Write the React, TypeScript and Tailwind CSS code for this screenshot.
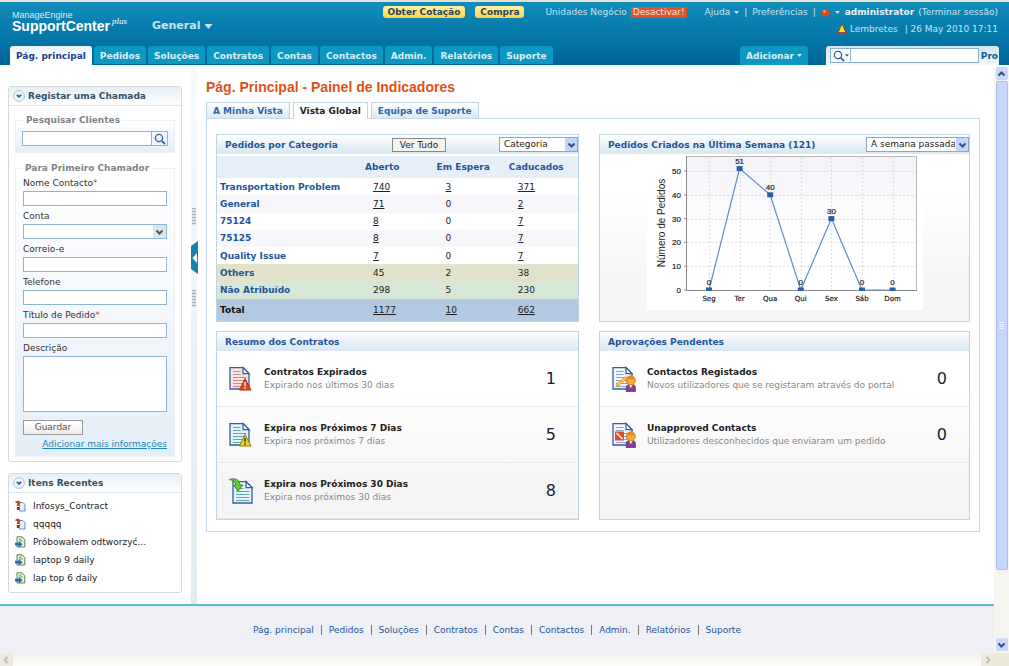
import React from "react";

const NAV = ["Pág. principal", "Pedidos", "Soluções", "Contratos", "Contas", "Contactos", "Admin.", "Relatórios", "Suporte"];

const ROWS: { name: string; values: string[]; tone: string; links: boolean[] }[] = [
  { name: "Transportation Problem", values: ["740", "3", "371"], tone: "bg-white", links: [true, true, true] },
  { name: "General", values: ["71", "0", "2"], tone: "bg-[#f6f6fb]", links: [true, false, true] },
  { name: "75124", values: ["8", "0", "7"], tone: "bg-white", links: [true, false, true] },
  { name: "75125", values: ["8", "0", "7"], tone: "bg-[#f6f6fb]", links: [true, false, true] },
  { name: "Quality Issue", values: ["7", "0", "7"], tone: "bg-white", links: [true, false, true] },
  { name: "Others", values: ["45", "2", "38"], tone: "bg-[#e2e2cb]", links: [false, false, false] },
  { name: "Não Atribuído", values: ["298", "5", "230"], tone: "bg-[#d7e7d7]", links: [false, false, false] },
];

const POINTS = [
  { day: "Seg", value: 0 },
  { day: "Ter", value: 51 },
  { day: "Qua", value: 40 },
  { day: "Qui", value: 0 },
  { day: "Sex", value: 30 },
  { day: "Sáb", value: 0 },
  { day: "Dom", value: 0 },
];

function SearchIcon() {
  return (
    <svg width="12" height="12" viewBox="0 0 12 12" fill="none" aria-hidden="true">
      <circle cx="5" cy="5" r="3.6" stroke="#33649e" strokeWidth="1.3" />
      <path d="M7.8 7.8 L11 11" stroke="#33649e" strokeWidth="1.9" />
    </svg>
  );
}

function Caret({ className }: { className: string }) {
  return (
    <svg className={className} viewBox="0 0 10 6" fill="currentColor" aria-hidden="true">
      <path d="M0 0H10L5 6Z" />
    </svg>
  );
}

function Chevron({ d = "M1.5 2.5 L4.5 5.5 L7.5 2.5", color = "#33507c" }: { d?: string; color?: string }) {
  return (
    <svg width="9" height="8" viewBox="0 0 9 8" fill="none" aria-hidden="true">
      <path d={d} stroke={color} strokeWidth="2" />
    </svg>
  );
}

function ToggleIcon() {
  return (
    <svg width="12" height="12" viewBox="0 0 12 12" fill="none" aria-hidden="true">
      <circle cx="6" cy="6" r="5.4" fill="#eef5fb" stroke="#a4c3dd" />
      <path d="M3.9 4.8 L6 6.9 L8.1 4.8" stroke="#1f5a9a" strokeWidth="1.7" />
    </svg>
  );
}

type Badge = "red" | "yellow" | "arrow" | "pencil" | "denied";

function DocIcon({ badge }: { badge: Badge }) {
  const line = badge === "red" ? "#c98a8c" : badge === "yellow" || badge === "arrow" ? "#5cab9f" : "#8ea4c4";
  const fill = badge === "red" ? "#fbe3e0" : badge === "yellow" || badge === "arrow" ? "#e4f4fb" : "#f1f7fd";
  const person = badge === "pencil" || badge === "denied";
  return (
    <svg width="26" height="26" viewBox="0 0 26 26" fill="none" aria-hidden="true">
      <g transform={badge === "arrow" ? "translate(3 3)" : "translate(0 1)"}>
        <path d="M1 0.6 H14 L20 6.6 V22 H1 Z" fill={fill} stroke="#335f9f" strokeWidth="1.3" />
        <path d="M14 0.6 V6.6 H20 Z" fill="#fff" stroke="#335f9f" strokeWidth="1.3" />
        <path d="M4 4.5H11.5M4 7.5H11.5M4 10.5H17.5M4 13.5H17.5M4 16.5H17.5M4 19.5H17.5" stroke={line} strokeWidth="1.1" />
      </g>
      {badge === "red" && (
        <>
          <path d="M16 12.5 L22 24 H10.5 Z" fill="#dd4a22" stroke="#ad3110" strokeLinejoin="round" />
          <path d="M16 16V20.3M16 21.3V22.7" stroke="#fff" strokeWidth="1.2" />
        </>
      )}
      {badge === "yellow" && (
        <>
          <path d="M16 12.5 L22 24 H10.5 Z" fill="#f3d519" stroke="#8b7715" strokeLinejoin="round" />
          <path d="M16 16V20.3M16 21.3V22.7" stroke="#222" strokeWidth="1.3" />
        </>
      )}
      {badge === "arrow" && (
        <path d="M0.5 1.6 C5 -0.3 10.5 1 11 7 H14 L9 13 L4.3 7 H7 C6.7 4 4.2 2.2 0.5 1.6Z" fill="#63cc2e" stroke="#2e8230" strokeWidth="0.9" />
      )}
      {badge === "pencil" && <path d="M3.8 20.5 L5.4 17.4 L13.6 10.6 L15.2 12.4 L6.8 19.4 Z" fill="#fbd442" stroke="#d28e22" strokeWidth="0.8" />}
      {badge === "denied" && (
        <>
          <path d="M3 9.5H12V18.5H3Z" fill="#e14d24" />
          <path d="M4.5 11L10.5 17" stroke="#fff" strokeWidth="1.5" />
        </>
      )}
      {person && (
        <>
          <path d="M14.2 25.4 V21.5 C14.2 19.2 16 18.4 18.7 18.4 C21.5 18.4 23.4 19.2 23.4 21.5 V25.4 Z" fill="#7f4398" stroke="#5e2b7a" strokeWidth="0.8" />
          <path d="M17 18.6 L18.8 22.3 L20.6 18.6Z" fill="#fff" />
          <circle cx="18.8" cy="14.4" r="4.5" fill="#f5ad36" stroke="#d87a1c" />
          <path d="M14.8 13.6 Q16 9.6 20 10.2 Q22.6 11 22.8 14 Q19.5 12.2 14.8 13.6" fill="#ea8720" />
        </>
      )}
    </svg>
  );
}

function ContractIcon() {
  return (
    <svg width="11" height="12" viewBox="0 0 11 12" fill="none" aria-hidden="true">
      <path d="M4.5 2.5H8L10 4.5V11H4.5Z" fill="#e3f0fc" stroke="#5a86bb" strokeWidth="0.9" />
      <path d="M0.5 1.5 C2 0.2 5 0.4 5.2 2.4 C5.3 4 4.3 4.3 4.2 6 H1.8 C1.8 4.6 2.4 4.2 2.4 3 L0.5 3Z" fill="#d3401c" />
      <path d="M1.8 7H4.3V10H1.8Z" fill="#a32c11" />
    </svg>
  );
}

function RequestIcon() {
  return (
    <svg width="11" height="12" viewBox="0 0 11 12" fill="none" aria-hidden="true">
      <path d="M2 0.8H7L9.8 3.6V11H2Z" fill="#e5f2e0" stroke="#4f8b50" strokeWidth="1" />
      <path d="M4 3.2H6.5M4 5H8" stroke="#6aa668" />
      <path d="M0 6.8H3.8V5L7.5 8.2L3.8 11.4V9.5H0Z" fill="#2d65bb" />
    </svg>
  );
}

function Header() {
  return (
    <header className="flex h-[65px] shrink-0 flex-col border-t-2 border-[#e6e1d5] bg-linear-to-b from-[#118dba] to-[#006599] text-[#c2e4f3]">
      <div className="flex flex-1 items-start justify-between pl-3 pr-[11px] pt-1">
        <div className="flex items-end">
          <div className="w-[140px] pt-1 text-white">
            <div className="font-['Liberation_Sans'] text-[9px] leading-[10px] text-[#d7eef8]">ManageEngine</div>
            <div className="flex leading-[13px]">
              <span className="font-['Liberation_Sans'] text-[14px] font-bold">SupportCenter</span>
              <span className="-mt-1 ml-[2px] font-['Liberation_Serif'] text-[9px] italic leading-[10px]">plus</span>
            </div>
          </div>
          <button type="button" className="flex items-center gap-1 text-[11px] font-bold leading-[14px]">
            General <Caret className="h-[5px] w-[9px]" />
          </button>
        </div>
        <div className="flex flex-col items-end gap-[5px]">
          <div className="flex items-center leading-3">
            <div className="mr-[21px] flex gap-[10px] font-bold text-[#26455b]">
              <button type="button" className="h-[12px] rounded-[3px] bg-linear-to-b from-[#fff2a0] to-[#fbd33c] px-[5px] leading-[12px]">Obter Cotação</button>
              <button type="button" className="h-[12px] rounded-[3px] bg-linear-to-b from-[#fff2a0] to-[#fbd33c] px-[5px] leading-[12px]">Compra</button>
            </div>
            <span>Unidades Negócio</span>
            <button type="button" className="ml-1 h-[11px] bg-[#de5428] px-[2px] leading-[11px] text-[#fbe0d4]">Desactivar!</button>
            <a href="#ajuda" className="ml-[18px] flex items-center gap-1">Ajuda <Caret className="h-[3px] w-[5px]" /></a>
            <span className="mx-[5px]">|</span>
            <a href="#preferencias">Preferências</a>
            <span className="mx-[5px]">|</span>
            <svg width="9" height="9" viewBox="0 0 9 9" aria-hidden="true">
              <circle cx="4.5" cy="4.8" r="3.7" fill="#e1481b" />
              <circle cx="3.4" cy="3.4" r="1.3" fill="#f7a07c" />
            </svg>
            <Caret className="mx-[5px] h-[3px] w-[5px]" />
            <b className="mr-1 text-[#e0f2fa]">administrator</b>
            <a href="#sair">(Terminar sessão)</a>
          </div>
          <div className="flex items-center leading-3">
            <svg width="10" height="11" viewBox="0 0 10 11" aria-hidden="true">
              <path d="M5 0.8C7.4 2.4 6.6 6 9.4 8.6H0.6C3.4 6 2.6 2.4 5 0.8Z" fill="#ffd931" stroke="#b5401b" />
              <path d="M3.5 9.2H6.5V10.4H3.5Z" fill="#c8461c" />
            </svg>
            <a href="#lembretes" className="ml-[3px] mr-[7px]">Lembretes</a>
            <span>| 26 May 2010 17:11</span>
          </div>
        </div>
      </div>
      <div className="flex items-end justify-between pl-[10px] pr-[10px]">
        <nav className="flex gap-[2px] font-bold">
          {NAV.map((item, i) => (
            <a
              key={item}
              href={`#${item}`}
              className={
                i === 0
                  ? "h-[19px] rounded-t-[3px] bg-linear-to-b from-[#e9f3f9] to-white to-60% px-[6px] leading-[20px] text-[#173f8a]"
                  : "h-[19px] rounded-t-[3px] border-b border-[#05669a] bg-[#0c98c3] px-[6px] leading-[20px] text-[#d9eff7]"
              }
            >
              {item}
            </a>
          ))}
        </nav>
        <div className="flex items-end">
          <button type="button" className="mr-[18px] flex h-[19px] items-center gap-[3px] rounded-t-[3px] bg-[#0c98c3] px-[6px] font-bold text-[#d9eff7]">
            Adicionar <Caret className="h-[3px] w-[5px]" />
          </button>
          <form className="flex h-[19px] w-[173px] items-center rounded-t-[3px] bg-linear-to-b from-[#cfe6f1] to-[#f1f8fb] pl-1">
            <button type="button" aria-label="Opções de pesquisa" className="flex h-[15px] w-[21px] shrink-0 items-center justify-center border border-[#88b0cf] bg-white text-[#33649e]">
              <SearchIcon />
              <Caret className="h-[3px] w-[4px]" />
            </button>
            <input aria-label="Pesquisar" className="h-[15px] min-w-0 flex-1 border border-l-0 border-[#88b0cf] bg-white" />
            <span className="ml-[2px] mr-px font-bold text-[#17598a]">Pro</span>
          </form>
        </div>
      </div>
    </header>
  );
}

function SidePanel({ title, children }: { title: string; children: React.ReactNode }) {
  return (
    <section className="rounded-[3px] border border-[#d4d9dd] bg-white">
      <h2 className="flex h-[19px] items-center gap-[3px] border-b border-[#dbe5ea] bg-linear-to-b from-[#e6f0f5] to-white pl-1 font-bold text-[#34515f]">
        <ToggleIcon />
        <span>{title}</span>
      </h2>
      {children}
    </section>
  );
}

const FIELD = "mt-px block h-[15px] w-full border border-[#8fb4d6] bg-white";
const LABEL = "block leading-[14px]";

function Field({ id, label, required }: { id: string; label: string; required?: boolean }) {
  return (
    <div>
      <label htmlFor={id} className={LABEL}>
        {label}
        {required && <span className="text-[#e03c10]">*</span>}
      </label>
      <input id={id} className={FIELD} />
    </div>
  );
}

function Sidebar() {
  const recent = [
    { text: "Infosys_Contract", contract: true },
    { text: "qqqqq", contract: true },
    { text: "Próbowałem odtworzyć...", contract: false },
    { text: "laptop 9 daily", contract: false },
    { text: "lap top 6 daily", contract: false },
  ];
  return (
    <aside className="flex w-[182px] shrink-0 flex-col gap-[11px] pl-2 pt-[21px] text-[#333]">
      <SidePanel title="Registar uma Chamada">
        <form className="px-[6px] pb-1 pt-[8px]">
          <fieldset className="border border-[#edf1f5] bg-linear-to-b from-white to-[#e4eef7] px-[6px] pb-[6px]">
            <legend className="ml-[2px] px-[2px] font-bold leading-3 text-[#7f8488]">Pesquisar Clientes</legend>
            <div className="mt-[5px] flex">
              <input aria-label="Pesquisar Clientes" className="h-[15px] min-w-0 flex-1 border border-r-0 border-[#8fb4d6] bg-white" />
              <button type="button" aria-label="Procurar cliente" className="flex h-[15px] w-[17px] items-center justify-center border border-[#8fb4d6] bg-[#eef5fb]">
                <SearchIcon />
              </button>
            </div>
          </fieldset>
          <fieldset className="mt-[9px] border border-[#edf1f5] bg-linear-to-b from-white via-[#f4f7fc] to-[#e4eef7] px-[7px] pb-[6px]">
            <legend className="px-[2px] font-bold leading-3 text-[#7f8488]">Para Primeiro Chamador</legend>
            <div className="flex flex-col gap-[3px] pt-[2px]">
              <Field id="nome" label="Nome Contacto" required />
              <div>
                <label htmlFor="conta" className={LABEL}>Conta</label>
                <div className="relative">
                  <select id="conta" className="mt-px block h-[15px] w-full appearance-none border border-[#8fb4d6] bg-white" />
                  <span className="pointer-events-none absolute right-px top-px flex h-[13px] w-[13px] items-center justify-center bg-[#dbe6f1]"><Chevron color="#555" /></span>
                </div>
              </div>
              <Field id="correio" label="Correio-e" />
              <Field id="telefone" label="Telefone" />
              <Field id="titulo" label="Título de Pedido" required />
              <div>
                <label htmlFor="descricao" className={LABEL}>Descrição</label>
                <textarea id="descricao" className="mt-px block h-[56px] w-full resize-none border border-[#8fb4d6] bg-white" />
              </div>
              <button type="button" className="mt-[5px] h-[15px] w-[60px] border border-[#9a9a9a] bg-linear-to-b from-white to-[#ececea] leading-[13px] text-[#555]">Guardar</button>
              <a href="#mais" className="self-end leading-[12px] text-[#1a87b9] underline">Adicionar mais informações</a>
            </div>
          </fieldset>
        </form>
      </SidePanel>
      <SidePanel title="Itens Recentes">
        <ul className="px-[6px] pb-[5px] pt-1 text-[#222]">
          {recent.map((item) => (
            <li key={item.text} className="flex h-[18px] items-center gap-[7px]">
              {item.contract ? <ContractIcon /> : <RequestIcon />}
              <a href="#item">{item.text}</a>
            </li>
          ))}
        </ul>
      </SidePanel>
    </aside>
  );
}

function Grip() {
  return (
    <svg width="4" height="17" viewBox="0 0 4 17" aria-hidden="true">
      <path d="M0 0.5H4M0 3.5H4M0 6.5H4M0 9.5H4M0 12.5H4M0 15.5H4" stroke="#a6adb2" strokeWidth="1.5" />
    </svg>
  );
}

function Splitter() {
  return (
    <div className="ml-[9px] mr-[9px] mt-[2px] flex w-[6px] shrink-0 flex-col items-center bg-linear-to-b from-[#f8fafb] to-[#e2ebee] pt-[141px]">
      <Grip />
      <button type="button" aria-label="Recolher painel" className="my-4 h-[33px] w-[7px] shrink-0 text-white">
        <svg width="7" height="33" viewBox="0 0 7 33" aria-hidden="true">
          <path d="M7 0V33L0 28V5Z" fill="#1583b0" />
          <path d="M6 12L1.5 17L6 22Z" fill="#fff" />
        </svg>
      </button>
      <Grip />
    </div>
  );
}

function DropSelect({ id, label, value, width }: { id: string; label: string; value: string; width: string }) {
  return (
    <div className={`relative ${width}`}>
      <label htmlFor={id} className="sr-only">{label}</label>
      <select id={id} className="block h-[15px] w-full appearance-none border border-[#8aa9c6] bg-white pl-1 pr-[13px] leading-[13px] text-[#222]">
        <option>{value}</option>
      </select>
      <span className="pointer-events-none absolute right-px top-px flex h-[13px] w-[12px] items-center justify-center bg-[#c3d5fb]"><Chevron /></span>
    </div>
  );
}

function Card({ title, tools, children }: { title: string; tools?: React.ReactNode; children: React.ReactNode }) {
  return (
    <section className="flex flex-col border border-[#bcd5e2] bg-linear-to-b from-white from-30% to-[#f5f5f5] to-80%">
      <div className="flex h-[19px] items-center justify-between bg-linear-to-b from-white to-[#d6e6f0] pl-2">
        <h2 className="font-bold text-[#24559a]">{title}</h2>
        {tools}
      </div>
      {children}
    </section>
  );
}

function CategoryTable() {
  return (
    <table className="mt-[2px] h-[165px] w-full table-fixed border-collapse text-left text-[#222]">
      <colgroup>
        <col className="w-[41%]" />
        <col className="w-[19%]" />
        <col className="w-[20%]" />
        <col className="w-[20%]" />
      </colgroup>
      <thead>
        <tr className="h-[22px] bg-[#e6eff7] text-[#24559a]">
          <th aria-label="Categoria" />
          <th>Aberto</th>
          <th className="pl-[3px]">Em Espera</th>
          <th className="pl-[3px]">Caducados</th>
        </tr>
      </thead>
      <tbody>
        {ROWS.map((row) => (
          <tr key={row.name} className={row.tone}>
            <th className="pl-[3px] text-[#24559a]">{row.name}</th>
            {row.values.map((v, i) => (
              <td key={i} className={i === 0 ? "pl-2" : "pl-3"}>
                {row.links[i] ? <a href="#pedidos" className="underline">{v}</a> : v}
              </td>
            ))}
          </tr>
        ))}
      </tbody>
      <tfoot>
        <tr className="h-[22px] bg-[#b3c9e2]">
          <th className="pl-[3px] text-[#111]">Total</th>
          <td className="pl-2"><a href="#pedidos" className="underline">1177</a></td>
          <td className="pl-3"><a href="#pedidos" className="underline">10</a></td>
          <td className="pl-3"><a href="#pedidos" className="underline">662</a></td>
        </tr>
      </tfoot>
    </table>
  );
}

function WeekChart() {
  const x = (i: number) => 62 + i * 30.6;
  const y = (v: number) => 134 - v * 2.38;
  const line = POINTS.map((p, i) => `${x(i)},${y(p.value)}`).join(" ");
  return (
    <svg className="mx-auto mt-[2px] block h-[154px] w-[276px]" viewBox="0 0 276 154" fontFamily="'Liberation Sans', sans-serif" fontSize="8" fill="#222" role="img" aria-label="Número de Pedidos">
      <defs>
        <clipPath id="plot"><rect x="40" y="1" width="231" height="134" /></clipPath>
        <linearGradient id="plotFill" x1="0" y1="0" x2="0" y2="1">
          <stop offset="0" stopColor="#f4f2f7" />
          <stop offset="0.6" stopColor="#fff" />
        </linearGradient>
      </defs>
      <rect width="276" height="154" fill="#fff" />
      <rect x="39.5" y="0.5" width="230" height="134" fill="url(#plotFill)" stroke="#b9b9b9" />
      <path d="M39.5 0V134.5H270" fill="none" stroke="#8d8d8d" />
      {[10, 20, 30, 40, 50].map((v) => (
        <line key={v} x1="40" x2="269" y1={Math.round(y(v)) + 0.5} y2={Math.round(y(v)) + 0.5} stroke="#dcdcdc" strokeDasharray="2 2" />
      ))}
      {POINTS.map((p, i) => (
        <line key={p.day} x1={Math.round(x(i)) + 0.5} x2={Math.round(x(i)) + 0.5} y1="1" y2="134" stroke="#dcdcdc" strokeDasharray="2 2" />
      ))}
      {[0, 10, 20, 30, 40, 50].map((v) => (
        <g key={v}>
          <line x1="37" x2="40" y1={y(v)} y2={y(v)} stroke="#8d8d8d" />
          <text x="34" y={y(v) + 3} textAnchor="end" stroke="#222" strokeWidth="0.2">{v}</text>
        </g>
      ))}
      <text transform="translate(18 67) rotate(-90)" textAnchor="middle" fontSize="10">Número de Pedidos</text>
      <g clipPath="url(#plot)">
        <polyline points={line} fill="none" stroke="#5d8cc4" strokeWidth="1.2" />
        {POINTS.map((p, i) => (
          <rect key={p.day} x={x(i) - 3} y={y(p.value) - 2.5} width="6" height="5" fill="#2a5ead" />
        ))}
      </g>
      {POINTS.map((p, i) => (
        <g key={p.day} textAnchor="middle" stroke="#222" strokeWidth="0.2">
          <text x={x(i)} y={y(p.value) - 5}>{p.value}</text>
          <text x={x(i)} y="145" fontFamily="'DejaVu Sans', sans-serif" fontSize="7">{p.day}</text>
        </g>
      ))}
    </svg>
  );
}

function Summary({ badge, title, text, count }: { badge: Badge; title: string; text: string; count: number }) {
  return (
    <div className="flex min-h-[56px] items-center border-b border-[#e7eaec] pl-3">
      <DocIcon badge={badge} />
      <div className="ml-[9px] flex-1">
        <h3 className="font-bold leading-[13px] text-[#222]">{title}</h3>
        <p className="leading-[13px] text-[#888]">{text}</p>
      </div>
      <a href="#lista" className="mr-[22px] text-[16px] text-[#1c1c33]">{count}</a>
    </div>
  );
}

function Main() {
  return (
    <main className="min-w-0 flex-1 pb-[72px] pr-[14px] pt-[13px]">
      <h1 className="font-['Liberation_Sans'] text-[14px] font-bold leading-[18px] text-[#dc5219]">Pág. Principal - Painel de Indicadores</h1>
      <div className="mt-[6px] flex gap-[3px] font-bold">
        <a href="#minha" className="h-[16px] border border-b-0 border-[#bcd5e2] bg-linear-to-b from-white to-[#dbe9f2] px-[6px] leading-[16px] text-[#2b66ac]">A Minha Vista</a>
        <a href="#global" className="relative -mb-px h-[17px] border border-b-0 border-[#bcd5e2] bg-white px-[6px] leading-[16px] text-[#222]">Vista Global</a>
        <a href="#equipa" className="h-[16px] border border-b-0 border-[#bcd5e2] bg-linear-to-b from-white to-[#dbe9f2] px-[6px] leading-[16px] text-[#2b66ac]">Equipa de Suporte</a>
      </div>
      <div className="grid grid-cols-[363fr_371fr] gap-x-5 gap-y-[9px] border border-[#c6dbe7] px-[9px] pb-[11px] pt-[15px]">
        <Card
          title="Pedidos por Categoria"
          tools={
            <div className="flex items-center">
              <button type="button" className="mr-[53px] h-[14px] w-[54px] border border-[#8a8a85] bg-[#f3f3ef] leading-[12px] text-[#222]">Ver Tudo</button>
              <DropSelect id="categoria" label="Agrupar por" value="Categoria" width="w-[79px]" />
            </div>
          }
        >
          <CategoryTable />
        </Card>
        <Card title="Pedidos Criados na Última Semana (121)" tools={<DropSelect id="periodo" label="Período" value="A semana passada" width="w-[103px]" />}>
          <WeekChart />
        </Card>
        <Card title="Resumo dos Contratos">
          <Summary badge="red" title="Contratos Expirados" text="Expirado nos últimos 30 dias" count={1} />
          <Summary badge="yellow" title="Expira nos Próximos 7 Dias" text="Expira nos próximos 7 dias" count={5} />
          <Summary badge="arrow" title="Expira nos Próximos 30 Dias" text="Expira nos próximos 30 dias" count={8} />
        </Card>
        <Card title="Aprovações Pendentes">
          <Summary badge="pencil" title="Contactos Registados" text="Novos utilizadores que se registaram através do portal" count={0} />
          <Summary badge="denied" title="Unapproved Contacts" text="Utilizadores desconhecidos que enviaram um pedido" count={0} />
        </Card>
      </div>
    </main>
  );
}

function VerticalScroll() {
  return (
    <div className="mt-[2px] flex w-[15px] shrink-0 flex-col items-center bg-[#f5f4ee]">
      <button type="button" aria-label="Subir" className="flex h-[13px] w-[12px] items-center justify-center rounded-[2px] bg-[#c9d8fb]"><Chevron d="M1.5 5.5 L4.5 2.5 L7.5 5.5" /></button>
      <div className="mt-px flex w-[12px] grow-[488] items-center justify-center rounded-[2px] border border-[#a9bff0] bg-[#c5d5fd]">
        <svg width="5" height="7" viewBox="0 0 5 7" aria-hidden="true"><path d="M0 0.5H5M0 2.5H5M0 4.5H5M0 6.5H5" stroke="#eef3ff" /></svg>
      </div>
      <div className="grow-[69]" />
      <button type="button" aria-label="Descer" className="mb-[2px] flex h-[13px] w-[12px] items-center justify-center rounded-[2px] bg-[#c9d8fb]"><Chevron /></button>
    </div>
  );
}

function HorizontalScroll() {
  return (
    <div className="flex h-[14px] shrink-0 items-center bg-linear-to-b from-[#f1f0e8] to-[#fefefb]">
      <button type="button" aria-label="Esquerda" className="flex h-[12px] w-[13px] items-center justify-center bg-[#eceade]"><Chevron d="M5.5 1 L2.5 4 L5.5 7" color="#c2c0b4" /></button>
      <div className="flex-1" />
      <button type="button" aria-label="Direita" className="flex h-[12px] w-[13px] items-center justify-center bg-[#eceade]"><Chevron d="M3.5 1 L6.5 4 L3.5 7" color="#c2c0b4" /></button>
      <div className="h-full w-[15px] bg-[#ece9d8]" />
    </div>
  );
}

export default function App() {
  return (
    <div className="flex min-h-screen flex-col bg-white font-['DejaVu_Sans',Verdana,sans-serif] text-[9px] leading-3">
      <Header />
      <div className="flex flex-1">
        <div className="flex min-w-0 flex-1 flex-col">
          <div className="flex flex-1">
            <Sidebar />
            <Splitter />
            <Main />
          </div>
          <footer className="flex h-[49px] items-center justify-center border-t-2 border-[#5fb4da] bg-[#eef0f5] text-[#24559a]">
            {NAV.map((item, i) => (
              <a key={item} href={`#${item}`} className={i === 0 ? "px-[7px] leading-[10px]" : "border-l border-[#777] px-[7px] leading-[10px]"}>{item}</a>
            ))}
          </footer>
        </div>
        <VerticalScroll />
      </div>
      <HorizontalScroll />
    </div>
  );
}
